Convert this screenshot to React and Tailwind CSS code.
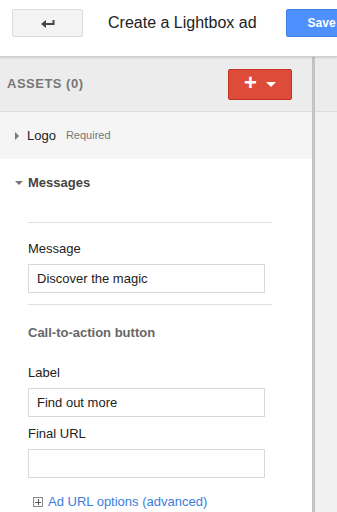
import React from "react";

const FONT = { fontFamily: '"Liberation Sans", Arial, sans-serif' };

function BackArrow() {
  return (
    <svg width="14" height="10" viewBox="0 0 14 10">
      <path d="M0 6 L5 2 L5 10 Z" fill="#444" />
      <path d="M4 6 H12.5 V2" stroke="#444" strokeWidth="2" fill="none" />
    </svg>
  );
}

function Field({ label, value }) {
  return (
    <div>
      <div className="text-[13px] leading-4 text-[#222]">{label}</div>
      <div className="mt-[7px] w-[237px] h-[29px] border border-[#d9d9d9] bg-white flex items-center px-[8px] text-[13px] text-[#222]">
        {value}
      </div>
    </div>
  );
}

export default function App() {
  return (
    <div className="w-[337px] h-[512px] overflow-hidden bg-white flex flex-col" style={FONT}>
      {/* top bar */}
      <div className="h-[57px] shrink-0 flex items-start pt-[9px] border-b border-[#cfcfcf] shadow-[0_1px_2px_rgba(0,0,0,0.12)] relative z-10 bg-white overflow-hidden">
        <button className="ml-[12px] w-[71px] h-[28px] shrink-0 bg-[#f3f3f3] border border-[#dcdcdc] rounded-[2px] flex items-center justify-center">
          <BackArrow />
        </button>
        <div className="ml-[25px] mt-[4px] shrink-0 text-[16px] leading-5 text-[#222] whitespace-nowrap">
          Create a Lightbox ad
        </div>
        <button className="ml-[29px] h-[28px] w-[70px] shrink-0 bg-[#4d90fe] border border-[#3f7fe8] rounded-[2px] text-white text-[12px] font-bold text-left pl-[21px]">
          Save
        </button>
      </div>

      <div className="flex flex-1 min-h-0">
        {/* left panel */}
        <div className="w-[312px] shrink-0 flex flex-col">
          <div className="h-[55px] bg-[#ececec] border-b border-[#dcdcdc] flex items-center justify-between pl-[7px] pr-[20px]">
            <span className="text-[13px] font-bold text-[#777] tracking-[0.5px]">ASSETS (0)</span>
            <button className="w-[64px] h-[31px] bg-[#dd4b39] border border-[#c23321] rounded-[2px] flex items-center justify-center gap-[9px]">
              <span className="text-white text-[22px] font-bold leading-none -mt-[2px]">+</span>
              <span className="w-0 h-0 border-l-[5px] border-r-[5px] border-t-[5px] border-l-transparent border-r-transparent border-t-white" />
            </button>
          </div>

          <div className="h-[47px] bg-[#f5f5f5] flex items-center pl-[15px]">
            <span className="w-0 h-0 border-t-[4px] border-b-[4px] border-l-[4px] border-t-transparent border-b-transparent border-l-[#777]" />
            <span className="ml-[8px] text-[13px] text-[#222]">Logo</span>
            <span className="ml-[10px] text-[11px] text-[#777]">Required</span>
          </div>

          <div className="h-[48px] bg-white flex items-center pl-[15px]">
            <span className="w-0 h-0 border-l-[4px] border-r-[4px] border-t-[4px] border-l-transparent border-r-transparent border-t-[#777]" />
            <span className="ml-[5px] text-[13px] font-bold text-[#444]">Messages</span>
          </div>

          <div className="pl-[28px] flex flex-col">
            <div className="mt-[15px] w-[244px] border-t border-[#e0e0e0]" />
            <div className="mt-[18px]">
              <Field label="Message" value="Discover the magic" />
            </div>
            <div className="mt-[11px] w-[244px] border-t border-[#e0e0e0]" />
            <div className="mt-[20px] text-[13px] leading-4 font-bold text-[#666]">Call-to-action button</div>
            <div className="mt-[24px]">
              <Field label="Label" value="Find out more" />
            </div>
            <div className="mt-[9px]">
              <Field label="Final URL" value="" />
            </div>
            <div className="mt-[16px] ml-[5px] flex items-center gap-[5px]">
              <span className="w-[10px] h-[10px] border border-[#888] relative flex items-center justify-center">
                <span className="absolute w-[6px] h-px bg-[#555]" />
                <span className="absolute h-[6px] w-px bg-[#555]" />
              </span>
              <span className="text-[13px] leading-4 text-[#3b7ddd]">Ad URL options (advanced)</span>
            </div>
          </div>
        </div>

        {/* separator */}
        <div className="w-[3px] shrink-0 bg-[#c4c4c4]" />

        {/* right area */}
        <div className="flex-1 bg-[#f1f1f1] flex flex-col">
          <div className="h-[55px] bg-[#ececec] border-b border-[#dcdcdc]" />
        </div>
      </div>
    </div>
  );
}
